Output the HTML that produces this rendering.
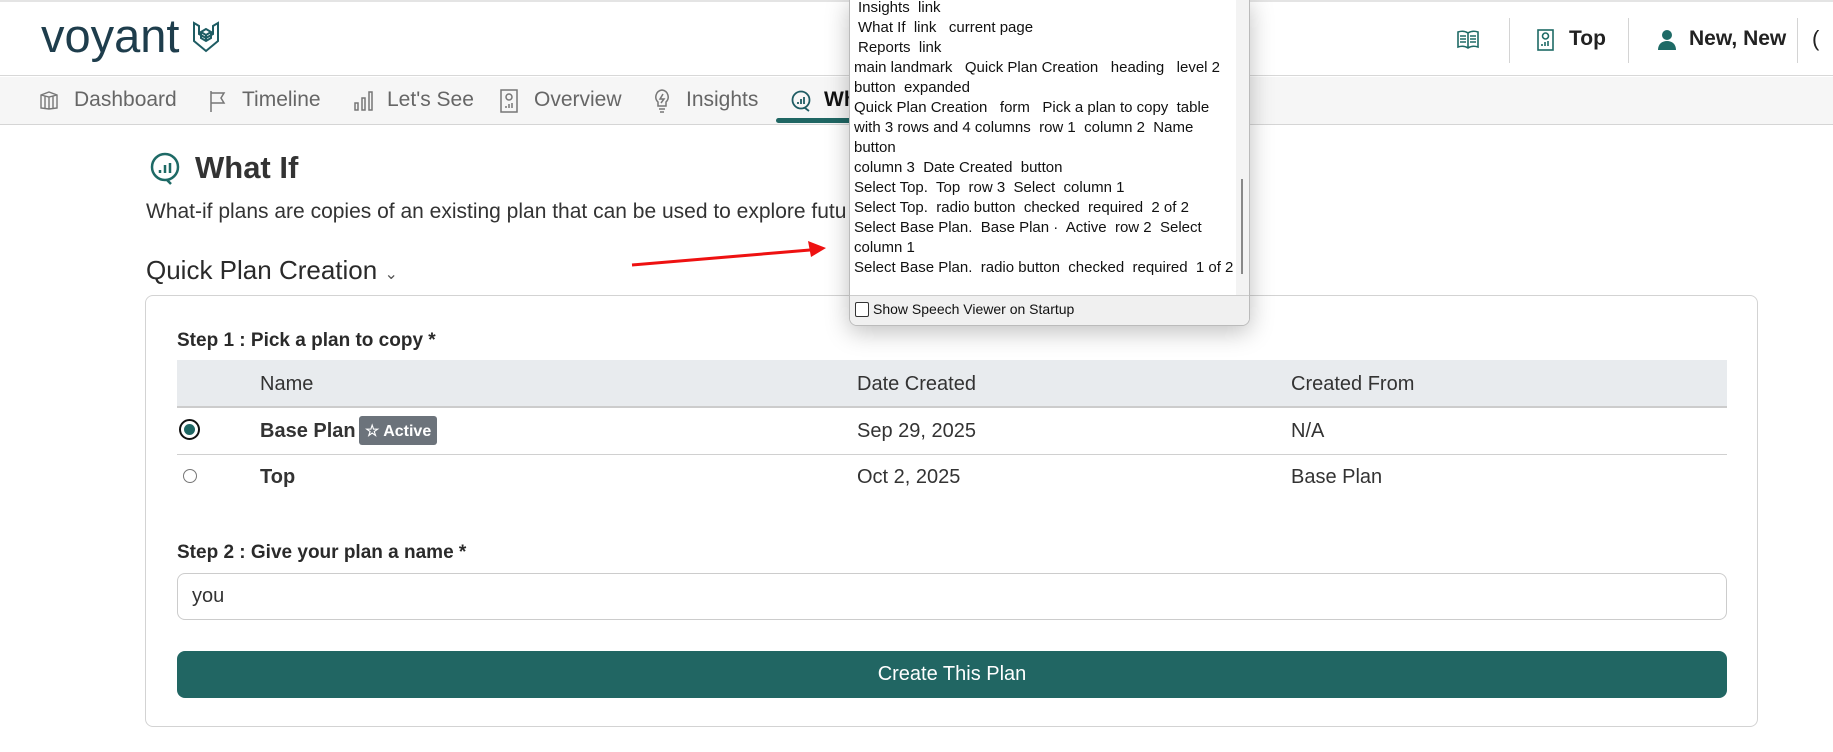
<!DOCTYPE html>
<html><head><meta charset="utf-8"><style>
*{box-sizing:border-box;margin:0;padding:0}
body{width:1833px;height:752px;overflow:hidden;background:#fff;font-family:"Liberation Sans",sans-serif;color:#222;position:relative}
.abs{position:absolute;white-space:nowrap}
.hdr{position:absolute;left:0;top:0;width:1833px;height:76px;border-top:2px solid #e4e4e4;border-bottom:1px solid #d8d8d8;background:#fff}
.nav{position:absolute;left:0;top:77px;width:1833px;height:48px;background:#f6f6f6;border-bottom:1px solid #d5d5d5}
.nav span{position:absolute;top:11px;font-size:21px;color:#666}
.sep{position:absolute;top:16px;width:1px;height:45px;background:#d4d4d4}
.card{position:absolute;left:145px;top:295px;width:1613px;height:432px;border:1px solid #d3d3d3;border-radius:8px}
.lbl{font-size:19px;font-weight:bold;color:#2a2a2a}
.sv{position:absolute;left:849px;top:-2px;width:401px;height:328px;background:#fff;border:1px solid #bbb;border-radius:0 0 8px 8px;box-shadow:0 6px 24px rgba(0,0,0,.25);font-size:15px;color:#111;overflow:hidden}
.sv div.l{position:absolute;left:4px;white-space:nowrap}
</style></head><body>
<div class="hdr">
 <div class="abs" style="left:41px;top:6px;font-size:47px;color:#1e3d4c">voyant</div>
 <svg class="abs" style="left:191px;top:18px" width="30" height="34" viewBox="0 0 30 34" fill="none" stroke="#1e5c63" stroke-width="2"><path d="M3 3l5 3v8l7 4 7-4V6l5-3v18L15 31 3 21z"/><path d="M15 9l-5 3v6l5 3 5-3v-6zM10 12l5 3 5-3M15 15v6"/></svg>
 <svg class="abs" style="left:1457px;top:28px" width="22" height="20" viewBox="0 0 22 20" fill="none" stroke="#1e6a66" stroke-width="1.6"><path d="M11 3C8 1 4 1 1 2v15c3-1 7-1 10 1 3-2 7-2 10-1V2c-3-1-7-1-10 1zM11 3v15M3 6h6M3 9h6M3 12h6M13 6h6M13 9h6M13 12h6"/></svg>
 <div class="sep" style="left:1509px"></div>
 <svg class="abs" style="left:1537px;top:27px" width="17" height="22" viewBox="0 0 17 22" fill="none" stroke="#1e6a66" stroke-width="1.6"><rect x="1" y="1" width="15" height="20"/><circle cx="8.5" cy="7" r="3"/><path d="M5 17v-2M8 17v-4M11 17v-5"/></svg>
 <div class="abs" style="left:1569px;top:25px;font-size:21px;font-weight:bold;color:#222">Top</div>
 <div class="sep" style="left:1628px"></div>
 <svg class="abs" style="left:1658px;top:28px" width="18" height="20" viewBox="0 0 18 20" fill="#1e6a66"><circle cx="9" cy="5" r="5"/><path d="M0 20c0-6 4-9 9-9s9 3 9 9z"/></svg>
 <div class="abs" style="left:1689px;top:25px;font-size:21px;font-weight:bold;color:#222">New, New</div>
 <div class="sep" style="left:1797px"></div>
 <div class="abs" style="left:1812px;top:24px;font-size:22px;color:#222">(</div>
</div>
<div class="nav">
 <svg class="abs" style="left:40px;top:13px" width="18" height="20" viewBox="0 0 18 20" fill="none" stroke="#777" stroke-width="1.4"><path d="M1 5l8-3 8 3v13l-8 1-8-1zM1 5l8 2 8-2M9 7v12M5 6v12M13 6v12"/></svg>
 <span style="left:74px">Dashboard</span>
 <svg class="abs" style="left:209px;top:13px" width="18" height="22" viewBox="0 0 18 22" fill="none" stroke="#777" stroke-width="1.5"><path d="M2 1v21M2 3h13l-3 5 3 5H2"/></svg>
 <span style="left:242px">Timeline</span>
 <svg class="abs" style="left:354px;top:14px" width="20" height="20" viewBox="0 0 20 20" fill="none" stroke="#777" stroke-width="1.5"><rect x="1" y="12" width="3" height="7"/><rect x="8" y="7" width="3" height="12"/><rect x="15" y="1" width="3" height="18"/></svg>
 <span style="left:387px">Let's See</span>
 <svg class="abs" style="left:500px;top:12px" width="18" height="24" viewBox="0 0 18 24" fill="none" stroke="#777" stroke-width="1.5"><rect x="1" y="1" width="16" height="22"/><circle cx="9" cy="8" r="3"/><path d="M6 19v-2M9 19v-4M12 19v-5"/></svg>
 <span style="left:534px">Overview</span>
 <svg class="abs" style="left:654px;top:12px" width="16" height="24" viewBox="0 0 16 24" fill="none" stroke="#777" stroke-width="1.5"><path d="M8 1a7 7 0 0 0-4 12v4h8v-4A7 7 0 0 0 8 1zM5 20h6M6 23h4M9 5l-3 5h4l-3 4"/></svg>
 <span style="left:686px">Insights</span>
 <svg class="abs" style="left:791px;top:13px" width="21" height="22" viewBox="0 0 21 22" fill="none" stroke="#1e5c63" stroke-width="1.8"><circle cx="10" cy="10" r="8.5"/><path d="M7 14v-2M10 14v-5M13 14v-7M14 18l4 3"/></svg>
 <span style="left:824px;color:#111;font-weight:bold">Wh</span>
 <div class="abs" style="left:776px;top:41px;width:80px;height:5px;background:#1f6663;border-radius:3px"></div>
</div>
<svg class="abs" style="left:149px;top:151px" width="32" height="34" viewBox="0 0 32 34" fill="none" stroke="#1e6a66" stroke-width="2.5"><circle cx="16" cy="16" r="13"/><path d="M11 22v-3M16 22v-8M21 22v-10M18 29l4 4"/></svg>
<div class="abs" style="left:195px;top:150px;font-size:31px;font-weight:bold;color:#333">What If</div>
<div class="abs" style="left:146px;top:200px;font-size:21px;color:#333">What-if plans are copies of an existing plan that can be used to explore futu</div>
<div class="abs" style="left:146px;top:255px;font-size:26px;color:#2a2a2a">Quick Plan Creation <span style="font-size:16px;color:#555">&#8964;</span></div>
<svg class="abs" style="left:630px;top:238px" width="200" height="30"><path d="M2 27L180 12" stroke="#ee1111" stroke-width="3"/><path d="M196 10l-18-7 3 16z" fill="#ee1111"/></svg>
<div class="card">
 <div class="abs lbl" style="left:31px;top:34px">Step 1 : Pick a plan to copy *</div>
 <div class="abs" style="left:31px;top:64px;width:1550px;height:48px;background:#e8ebee;border-bottom:2px solid #ccc"></div>
 <div class="abs" style="left:114px;top:77px;font-size:20px;color:#333">Name</div>
 <div class="abs" style="left:711px;top:77px;font-size:20px;color:#333">Date Created</div>
 <div class="abs" style="left:1145px;top:77px;font-size:20px;color:#333">Created From</div>
 <div class="abs" style="left:31px;top:158px;width:1550px;height:1px;background:#d0d0d0"></div>
 <div class="abs" style="left:33px;top:123px;width:21px;height:21px;border:2px solid #111;border-radius:50%;background:#fff"></div>
 <div class="abs" style="left:38px;top:128px;width:11px;height:11px;border-radius:50%;background:#1f6663"></div>
 <div class="abs" style="left:114px;top:124px;font-size:20px;font-weight:bold;color:#333">Base Plan</div>
 <div class="abs" style="left:213px;top:120px;width:78px;height:29px;background:#6c737b;border-radius:3px;color:#fff;font-size:16px;font-weight:bold;padding:5px 0 0 6px">&#9734; Active</div>
 <div class="abs" style="left:711px;top:124px;font-size:20px;color:#333">Sep 29, 2025</div>
 <div class="abs" style="left:1145px;top:124px;font-size:20px;color:#333">N/A</div>
 <div class="abs" style="left:37px;top:173px;width:14px;height:14px;border:1px solid #777;border-radius:50%"></div>
 <div class="abs" style="left:114px;top:170px;font-size:20px;font-weight:bold;color:#333">Top</div>
 <div class="abs" style="left:711px;top:170px;font-size:20px;color:#333">Oct 2, 2025</div>
 <div class="abs" style="left:1145px;top:170px;font-size:20px;color:#333">Base Plan</div>
 <div class="abs lbl" style="left:31px;top:246px">Step 2 : Give your plan a name *</div>
 <div class="abs" style="left:31px;top:277px;width:1550px;height:47px;border:1px solid #ccc;border-radius:8px;font-size:20px;color:#333;padding:11px 0 0 14px">you</div>
 <div class="abs" style="left:31px;top:355px;width:1550px;height:47px;background:#216663;border-radius:8px;color:#fff;font-size:20px;text-align:center;padding-top:12px">Create This Plan</div>
</div>
<div class="sv">
 <div class="l" style="top:0px;left:8px">Insights&nbsp; link</div>
 <div class="l" style="top:20px;left:8px">What If&nbsp; link&nbsp;&nbsp; current page</div>
 <div class="l" style="top:40px;left:8px">Reports&nbsp; link</div>
 <div class="l" style="top:60px">main landmark&nbsp;&nbsp; Quick Plan Creation&nbsp;&nbsp; heading&nbsp;&nbsp; level 2</div>
 <div class="l" style="top:80px">button&nbsp; expanded</div>
 <div class="l" style="top:100px">Quick Plan Creation&nbsp;&nbsp; form&nbsp;&nbsp; Pick a plan to copy&nbsp; table</div>
 <div class="l" style="top:120px">with 3 rows and 4 columns&nbsp; row 1&nbsp; column 2&nbsp; Name</div>
 <div class="l" style="top:140px">button</div>
 <div class="l" style="top:160px">column 3&nbsp; Date Created&nbsp; button</div>
 <div class="l" style="top:180px">Select Top.&nbsp; Top&nbsp; row 3&nbsp; Select&nbsp; column 1</div>
 <div class="l" style="top:200px">Select Top.&nbsp; radio button&nbsp; checked&nbsp; required&nbsp; 2 of 2</div>
 <div class="l" style="top:220px">Select Base Plan.&nbsp; Base Plan&nbsp;·&nbsp; Active&nbsp; row 2&nbsp; Select</div>
 <div class="l" style="top:240px">column 1</div>
 <div class="l" style="top:260px">Select Base Plan.&nbsp; radio button&nbsp; checked&nbsp; required&nbsp; 1 of 2</div>
 <div style="position:absolute;left:386px;top:0;width:13px;height:296px;background:#f3f3f3"></div>
 <div style="position:absolute;left:391px;top:180px;width:2px;height:95px;background:#888"></div>
 <div style="position:absolute;left:0;top:296px;width:401px;height:32px;background:#f0f0f0;border-top:1px solid #ccc"></div>
 <div style="position:absolute;left:5px;top:303px;width:14px;height:15px;border:1px solid #333;border-radius:2px;background:#fff"></div>
 <div class="l" style="top:302px;left:23px;font-size:14px">Show Speech Viewer on Startup</div>
</div>
</body></html>
